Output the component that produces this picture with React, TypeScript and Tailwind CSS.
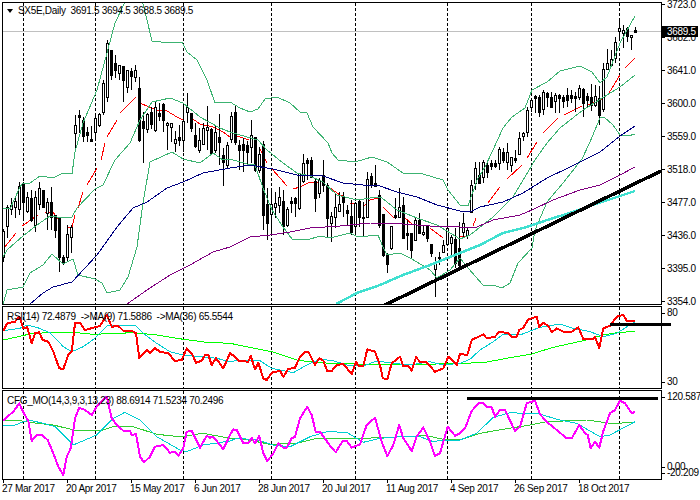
const GRID_X = [23.5, 95.5, 183.5, 271.5, 355.5, 447.5, 531.5, 619.5];

// high, body top, body bottom, low, hollow — pixel rows, one candle every 4px from x=3
const CANDLES = [
  [229,231,257,262,1],[205,207,226,238,1],[198,205,209,215,1],[198,201,207,218,1],[182,186,209,215,1],[182,183,202,220,0],
  [192,197,211,213,1],[190,198,220,222,0],[191,197,225,232,1],[182,188,204,210,1],[190,190,207,208,0],[198,202,213,230,1],
  [187,202,217,230,0],[215,215,230,238,0],[218,218,257,272,0],[255,257,263,265,0],[225,234,257,262,1],[225,227,237,253,1],
  [115,125,133,152,1],[110,115,117,133,0],[117,120,136,142,0],[127,132,135,142,0],[126,139,141,142,0],[115,118,132,140,1],
  [113,114,125,127,1],[80,83,112,115,1],[40,43,97,102,1],[50,50,75,80,0],[55,63,70,78,0],[65,65,73,80,1],
  [66,66,80,102,0],[70,70,87,93,1],[68,71,76,90,0],[65,70,77,82,1],[77,88,140,142,0],[112,121,128,163,0],
  [113,114,129,133,1],[107,112,124,129,0],[102,107,130,132,1],[103,113,116,121,0],[103,104,120,132,0],[122,123,125,150,1],
  [123,123,127,142,1],[131,139,143,152,1],[125,137,140,146,0],[103,121,140,152,1],[93,107,112,123,1],[113,113,128,132,0],
  [123,135,146,148,0],[128,140,150,153,1],[123,128,144,144,1],[106,127,130,150,1],[128,129,153,153,0],[125,132,150,153,1],
  [114,137,142,165,0],[148,155,162,186,0],[142,145,165,168,1],[112,116,139,143,1],[106,112,142,145,0],[140,145,150,170,0],
  [138,144,150,172,0],[141,145,152,165,0],[120,135,147,163,1],[137,137,170,172,0],[147,154,170,173,1],[141,144,215,230,0],
  [188,204,223,240,0],[188,204,214,233,1],[192,203,207,218,1],[187,197,205,213,1],[190,201,226,235,0],[207,209,225,227,1],
  [197,201,203,213,0],[197,198,203,217,0],[173,173,208,210,1],[154,163,181,183,1],[158,160,163,180,0],[157,160,177,178,0],
  [179,181,198,212,0],[178,180,193,198,1],[160,175,185,192,0],[183,185,218,238,0],[212,216,223,242,1],[193,207,217,228,1],
  [192,204,211,212,1],[192,197,202,217,0],[205,210,213,225,0],[200,216,232,235,0],[202,203,226,233,1],[200,201,217,227,0],
  [202,217,218,237,0],[172,179,217,218,1],[173,176,184,188,0],[165,183,186,187,0],[190,195,225,228,0],[214,214,255,257,0],
  [253,255,264,273,0],[226,226,248,250,1],[198,215,217,219,0],[188,207,217,218,1],[197,205,238,239,0],[220,233,235,250,0],
  [233,233,250,258,0],[218,220,240,241,1],[213,220,233,234,0],[225,232,234,236,1],[225,226,238,242,0],[244,244,253,257,0],
  [257,262,269,297,1],[252,257,258,265,0],[240,245,252,253,1],[218,228,244,245,1],[235,237,243,255,1],[228,239,263,268,0],
  [222,248,265,268,0],[213,223,232,237,1],[227,230,235,239,1],[180,185,212,212,1],[162,168,183,190,1],[162,175,183,184,0],
  [160,162,177,183,1],[160,165,172,178,0],[160,163,166,170,0],[160,163,166,168,0],[147,149,163,170,1],[148,152,160,163,0],
  [143,152,162,170,1],[157,157,165,172,1],[150,158,160,163,0],[132,138,154,155,1],[132,133,136,141,1],[107,110,132,137,1],
  [98,100,107,112,1],[95,96,98,113,0],[95,97,112,117,0],[90,92,109,115,1],[92,93,97,107,0],[92,97,107,108,0],
  [93,95,101,113,1],[94,95,98,113,0],[95,97,101,108,0],[88,95,100,107,0],[90,95,98,103,0],[92,96,98,112,0],
  [85,88,97,100,1],[88,89,103,117,0],[93,96,100,108,0],[84,97,105,111,0],[85,96,105,107,1],[86,98,115,125,0],
  [63,69,109,112,1],[49,63,69,70,1],[50,59,65,66,1],[37,42,58,63,1],[18,28,31,40,1],[25,30,33,48,1],
  [27,28,36,42,0],[35,35,37,50,1],[27,30,32,33,0],
];

const RED_SEGMENTS = [
  '4,248 16,233', '22,226 38,215', '45,212 53,212 60,222', '67,227 72,227 75,215', '78,208 83,192', '87,185 97,168',
  '101,160 105,143', '107,137 117,120', '120,113 136,97', '140,103 156,110 167,111 177,117 183,120',
  '190,117 200,124 213,127 223,132 230,137', '237,136 249,140', '259,147 267,163', '272,169 280,178 287,186',
  '293,189 300,187 310,182 320,183', '330,188 340,195 345,197', '350,203 357,203', '363,207 370,200 378,198',
  '383,207 393,217 397,217', '405,218 412,224', '430,228 443,238', '460,237 467,236', '473,226 476,218',
  '488,203 500,187', '507,179 522,165', '527,158 537,142', '543,133 558,118', '564,115 582,106', '587,105 603,99',
  '609,93 620,75', '625,68 635,58',
];

const BB_UPPER =
  '3,208 10,209 20,187 23,183 30,183 40,176 53,178 63,173 72,174 75,152 83,123 97,90 107,53 115,23 126,0 142,0 147,20 152,41 170,43 182,42 187,52 197,60 207,80 215,103 230,102 240,108 250,112 258,109 265,99 277,97 290,103 300,112 307,113 313,127 328,143 332,153 338,160 355,162 372,157 387,162 403,173 423,174 443,180 448,190 460,205 468,206 477,180 485,167 493,150 503,128 512,117 525,108 532,90 547,82 560,71 580,66 592,72 600,83 607,77 620,43 635,16';
const BB_MID =
  '3,257 7,250 23,236 37,225 50,216 63,218 72,217 77,208 95,189 103,185 115,160 130,143 140,120 152,102 170,98 183,103 200,117 220,128 230,132 247,137 258,140 267,150 283,163 297,173 310,176 323,182 337,195 357,200 377,197 382,198 397,210 417,218 437,225 460,239 470,235 493,217 513,197 535,160 547,143 560,128 583,110 607,95 620,87 635,75';
const BB_LOWER =
  '3,305 7,290 23,287 30,273 43,265 52,254 63,264 73,259 78,275 95,279 102,283 107,293 120,290 128,277 137,247 143,203 150,162 172,152 183,159 200,163 213,153 223,160 230,159 247,164 255,165 263,188 272,210 283,227 292,239 307,240 320,236 330,238 350,233 358,237 378,235 383,247 387,255 400,253 412,259 430,270 437,278 450,270 460,258 468,268 483,285 493,285 502,288 510,283 518,263 532,248 535,230 547,202 563,183 582,159 590,142 600,118 604,117 613,125 620,135 628,136 635,134';
const NAVY =
  '30,304 43,293 53,287 72,282 97,255 117,227 133,208 147,202 167,188 183,182 203,173 230,168 250,165 273,169 297,175 323,176 343,183 363,185 377,185 397,192 417,197 437,205 460,211 472,211 480,207 503,202 523,193 547,178 570,167 600,152 620,136 635,126';
const PURPLE =
  '127,304 147,290 170,275 190,265 213,252 230,247 250,237 270,235 290,232 310,228 340,226 370,223 403,224 430,226 460,227 477,227 493,220 520,215 532,210 553,200 580,190 600,185 620,175 635,167';
const TURQUOISE =
  '336,304 357,293 380,285 403,275 430,265 460,253 480,245 503,233 527,227 547,220 570,213 593,205 617,197 635,191';

// points read off 3x crops of each third of the window
const crop = (x0: number, y0: number, pts: string) =>
  pts
    .split(' ')
    .map((p) => {
      const [x, y] = p.split(',').map(Number);
      return `${(x0 + x / 3).toFixed(1)},${(y0 + y / 3).toFixed(1)}`;
    })
    .join(' ');

const RSI_RED = [
  crop(0, 300, '10,92 22,70 45,65 58,50 70,85 82,82 95,130 105,100 118,97 128,120 145,125 160,155 178,205 190,207 205,165 215,155 225,70 240,68 255,90 285,82 300,78 320,45 335,80 355,78 370,92 395,92 408,100 418,175 440,150 450,158 465,145 480,155 505,160 525,183 545,180 560,145 575,160 588,188 605,182 615,165 625,165 635,195 648,175 670,205 690,160'),
  crop(230, 300, '15,170 25,182 55,185 62,168 75,208 85,188 100,235 110,240 125,218 150,212 160,230 175,207 195,203 210,170 225,155 235,155 255,195 268,175 280,182 292,213 305,213 320,195 340,192 365,222 378,185 385,197 400,197 412,148 435,155 450,195 458,235 472,238 485,190 510,170 520,198 535,198 545,212 558,172 570,185 590,187 615,215 640,205 655,170 670,185 680,195 690,162'),
  crop(460, 300, '22,165 35,120 70,103 80,115 105,110 118,95 145,100 155,110 170,110 178,90 190,83 205,58 230,50 238,82 250,68 265,78 275,97 290,85 310,95 335,95 355,82 370,117 400,118 405,110 418,145 430,85 450,77 470,50 490,45 500,62 525,63'),
].join(' ');
const RSI_CYAN = [
  crop(0, 300, '10,92 60,85 80,75 110,82 150,98 190,140 215,155 250,140 285,115 320,78 340,75 405,75 430,100 470,130 510,155 550,165 600,170 650,175 690,185'),
  crop(230, 300, '30,180 90,182 125,205 190,218 230,195 270,178 310,182 350,195 400,198 440,183 490,190 540,195 600,185 640,195 690,190'),
  crop(460, 300, '30,178 60,150 100,125 130,103 180,105 240,82 300,72 340,85 390,95 430,110 470,100 525,65'),
].join(' ');
const RSI_GREEN = [
  crop(0, 300, '10,120 90,102 150,97 220,97 280,103 400,98 470,105 550,118 620,127 690,130'),
  crop(230, 300, '50,140 125,155 200,180 260,188 380,192 500,195 620,192 690,190'),
  crop(460, 300, '70,188 140,175 215,162 280,142 370,122 430,105 470,98 525,94'),
].join(' ');

const CFG_MAGENTA = [
  crop(0, 385, '10,108 22,95 40,80 58,55 70,82 85,108 95,168 110,150 125,150 143,165 160,205 175,245 190,270 200,215 212,190 225,100 238,68 255,75 275,90 290,65 320,35 335,100 350,120 370,137 390,137 395,150 408,147 420,215 432,232 450,215 465,185 490,180 510,203 525,200 535,212 550,190 560,140 575,137 600,188 620,152 630,158 640,155 670,193 690,150'),
  crop(230, 385, '10,133 20,135 40,175 55,175 65,158 75,175 88,152 100,205 112,228 130,205 145,175 160,188 170,188 185,160 195,155 210,100 232,65 245,90 257,140 270,140 300,182 317,202 338,168 350,168 365,188 390,178 410,120 435,98 455,170 472,213 490,180 508,120 520,160 545,198 560,155 580,127 600,170 615,213 630,205 653,125 675,152 690,145'),
  crop(460, 385, '15,130 35,78 55,55 70,55 80,65 95,67 105,95 120,75 135,75 165,138 180,125 200,55 225,47 240,88 260,110 290,135 320,160 335,160 358,120 375,145 383,150 392,190 405,170 418,188 430,138 450,85 465,75 480,47 495,55 515,85 525,80'),
].join(' ');
const CFG_CYAN = [
  crop(0, 385, '10,120 45,120 85,105 130,115 165,125 220,180 290,150 340,100 375,82 420,105 470,155 540,195 560,200 610,180 690,168'),
  crop(230, 385, '20,160 85,165 130,180 180,185 240,155 290,140 350,142 400,172 450,160 510,155 570,155 610,170 640,165 690,165'),
  crop(460, 385, '50,145 100,97 150,83 240,87 290,103 350,115 420,155 450,150 525,110'),
].join(' ');
const CFG_GREEN = [
  crop(0, 385, '10,108 60,107 110,115 160,120 230,137 310,135 340,125 400,125 470,148 540,155 610,145 690,160'),
  crop(230, 385, '30,160 120,178 200,175 260,160 400,160 520,155 590,152 640,163 690,165'),
  crop(460, 385, '60,145 130,133 210,120 260,110 380,105 450,115 525,113'),
].join(' ');

const PRICE_LABELS = ['3723.0', '3682.0', '3641.0', '3600.0', '3559.0', '3518.0', '3477.0', '3436.0', '3395.0', '3354.0'];
const DATES = ['27 Mar 2017', '20 Apr 2017', '15 May 2017', '6 Jun 2017', '28 Jun 2017', '20 Jul 2017', '11 Aug 2017', '4 Sep 2017', '26 Sep 2017', '18 Oct 2017'];

function Line({ points, color, width = 1 }: { points: string; color: string; width?: number }) {
  return <polyline points={points} fill="none" stroke={color} strokeWidth={width} strokeLinejoin="round" />;
}

function Grid({ top, bottom }: { top: number; bottom: number }) {
  return (
    <>
      {GRID_X.map((x) => (
        <line key={x} x1={x} x2={x} y1={top} y2={bottom} stroke="#000" strokeDasharray="3 2" />
      ))}
    </>
  );
}

function Candles() {
  return (
    <>
      {CANDLES.map(([high, top, bottom, low, hollow], i) => {
        const x = 3 + i * 4;
        return (
          <g key={i}>
            <rect x={x} y={high} width={1} height={low - high} fill="#000" />
            <rect x={x - 1} y={top} width={3} height={bottom - top + 1} fill="#000" />
            {hollow === 1 && bottom - top > 1 && <rect x={x} y={top + 1} width={1} height={bottom - top - 1} fill="#fff" />}
          </g>
        );
      })}
    </>
  );
}

function AxisLabel({ children }: { children: string }) {
  return (
    <div className="flex h-[14px] flex-none items-center">
      <span className="h-px w-[3px] flex-none bg-black" />
      <span className="ml-[2px] leading-none whitespace-nowrap">{children}</span>
    </div>
  );
}

export default function App() {
  return (
    <div className="flex h-[500px] w-[700px] flex-col overflow-hidden bg-white pt-[2px] pl-[2px] font-['Liberation_Sans',sans-serif] text-[10px] tracking-[-0.3px] text-black">
      {/* Price */}
      <div className="flex h-[303px] flex-none">
        <div className="relative w-[659px] flex-none border-y border-l border-black">
          <svg className="block h-[301px] w-[658px]" viewBox="3 3 658 301" shapeRendering="crispEdges">
            <Grid top={3} bottom={304} />
            <line x1={3} x2={661} y1={31.5} y2={31.5} stroke="#c0c0c0" />
            {RED_SEGMENTS.map((s) => (
              <Line key={s} points={s} color="#ff0000" />
            ))}
            <Candles />
            <Line points={BB_UPPER} color="#3cb371" />
            <Line points={BB_MID} color="#3cb371" />
            <Line points={BB_LOWER} color="#3cb371" />
            <Line points={NAVY} color="#000080" />
            <Line points={PURPLE} color="#800080" />
            <Line points={TURQUOISE} color="#40e0d0" width={2.5} />
            <line x1={385} y1={305} x2={661} y2={171} stroke="#000" strokeWidth={3.5} />
          </svg>
          <div className="absolute top-0 left-[4px] flex items-center">
            <svg className="mr-[5px] h-[4px] w-[6px]" viewBox="0 0 6 4">
              <polygon points="0,0 6,0 3,4" fill="#000" />
            </svg>
            <span className="whitespace-pre">SX5E,Daily  3691.5 3694.5 3688.5 3689.5</span>
          </div>
        </div>
        <div className="w-[39px] flex-none border-l border-black">
          <div className="relative -mt-[14px]">
            {PRICE_LABELS.map((label) => (
              <div key={label} className="flex h-[33px] items-center">
                <span className="h-px w-[3px] flex-none bg-black" />
                <span className="ml-[2px] leading-none whitespace-nowrap">{label}</span>
              </div>
            ))}
            <div className="absolute top-[38px] left-0 bg-black pr-[2px] pl-[5px] leading-[11px] text-white">3689.5</div>
          </div>
        </div>
      </div>

      {/* RSI */}
      <div className="mt-px flex h-[83px] flex-none">
        <div className="w-[659px] flex-none border-y border-l border-black">
          <div className="relative">
            <svg className="block h-[81px] w-[658px] overflow-visible" viewBox="3 307 658 81" shapeRendering="crispEdges">
              <Grid top={307} bottom={388} />
              <Line points={RSI_GREEN} color="#00ff00" />
              <Line points={RSI_CYAN} color="#00ced1" />
              <Line points={RSI_RED} color="#ff0000" width={2} />
              <line x1={610} x2={671} y1={324.5} y2={324.5} stroke="#000" strokeWidth={3} />
            </svg>
            <div className="absolute top-[2px] left-[4px] whitespace-pre">RSI(14) 72.4879  -&gt;MA(9) 71.5886  -&gt;MA(36) 65.5544</div>
          </div>
        </div>
        <div className="flex w-[39px] flex-none flex-col justify-between border-l border-black">
          <AxisLabel>80</AxisLabel>
          <AxisLabel>30</AxisLabel>
        </div>
      </div>

      {/* CFG */}
      <div className="mt-px flex h-[90px] flex-none">
        <div className="w-[659px] flex-none border-y border-l border-black">
          <div className="relative">
            <svg className="block h-[88px] w-[658px]" viewBox="3 391 658 88" shapeRendering="crispEdges">
              <Grid top={391} bottom={479} />
              <Line points={CFG_GREEN} color="#32cd32" />
              <Line points={CFG_CYAN} color="#00ced1" />
              <Line points={CFG_MAGENTA} color="#ff00ff" width={2} />
              <line x1={467} x2={658} y1={398.5} y2={398.5} stroke="#000" strokeWidth={3} />
            </svg>
            <div className="absolute top-[2px] left-[4px] whitespace-pre">CFG_MO(14,3,9,3,13,23) 88.6914 71.5234 70.2496</div>
          </div>
        </div>
        <div className="relative flex w-[39px] flex-none flex-col justify-between border-l border-black">
          <AxisLabel>120.587</AxisLabel>
          <AxisLabel>-20.209</AxisLabel>
          <div className="absolute bottom-[6px] left-0">
            <AxisLabel>0.00</AxisLabel>
          </div>
        </div>
      </div>

      {/* Dates */}
      <div className="flex h-[20px] flex-none">
        {DATES.map((date) => (
          <div key={date} className="w-[64px] flex-none">
            <div className="ml-px h-[3px] w-px bg-black" />
            <div className="leading-[11px] whitespace-nowrap">{date}</div>
          </div>
        ))}
      </div>
    </div>
  );
}
